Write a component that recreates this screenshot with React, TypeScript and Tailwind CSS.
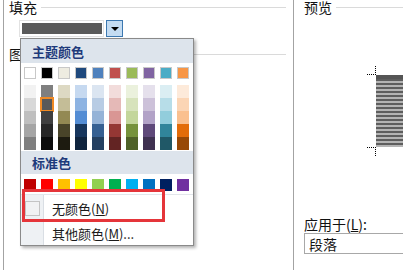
import React from 'react';

const font = "font-['Noto_Sans_CJK_SC','Noto_Sans',sans-serif]";

const themeTop = ['#ffffff', '#000000', '#eeece1', '#1f497d', '#4f81bd', '#c0504d', '#9bbb59', '#8064a2', '#4bacc6', '#f79646'];

const themeShades: string[][] = [
  ['#f2f2f2', '#d8d8d8', '#bfbfbf', '#a5a5a5', '#7f7f7f'],
  ['#7f7f7f', '#595959', '#3f3f3f', '#262626', '#0c0c0c'],
  ['#ddd9c3', '#c4bd97', '#938953', '#494429', '#1d1b10'],
  ['#c6d9f0', '#8db3e2', '#548dd4', '#17365d', '#0f243e'],
  ['#dbe5f1', '#b8cce4', '#95b3d7', '#366092', '#244061'],
  ['#f2dcdb', '#e5b9b7', '#d99694', '#953734', '#632423'],
  ['#ebf1dd', '#d7e3bc', '#c3d69b', '#76923c', '#4f6128'],
  ['#e5e0ec', '#ccc1d9', '#b2a2c7', '#5f497a', '#3f3151'],
  ['#dbeef3', '#b7dde8', '#92cddc', '#31859b', '#205867'],
  ['#fdeada', '#fbd5b5', '#fac08f', '#e36c09', '#974806'],
];

const standard = ['#c00000', '#ff0000', '#ffc000', '#ffff00', '#92d050', '#00b050', '#00b0f0', '#0070c0', '#002060', '#7030a0'];

const Legend = ({ label, indent }: { label: string; indent: string }) => (
  <div className={`flex items-center h-[15px] ${indent}`}>
    <span className="text-[14px] leading-[15px] text-[#111]">{label}</span>
    <div className="flex-1 h-px bg-[#dadada] ml-[4px]" />
  </div>
);

const ColorPicker = () => (
  <div className="absolute left-[20px] top-[38px] w-[174px] h-[208px] bg-white border border-[#8a8a8a] shadow-[2px_2px_3px_rgba(0,0,0,0.3)] flex flex-col">
    <div className="h-[24px] bg-[#dde4ec] flex items-center pl-[11px]">
      <span className="text-[13px] font-bold text-[#1e3a7b] leading-none">主题颜色</span>
    </div>
    <div className="pl-[3px] pt-[4px] grid grid-cols-[repeat(10,12px)] gap-x-[5px]">
      {themeTop.map((c) => (
        <div key={c} className="w-[12px] h-[12px] border border-[#c8c8c8]" style={{ backgroundColor: c }} />
      ))}
    </div>
    <div className="pl-[3px] pt-[6px] grid grid-cols-[repeat(10,12px)] gap-x-[5px]">
      {themeShades.map((col, ci) => (
        <div key={ci} className="flex flex-col">
          {col.map((c, ri) => (
            <div key={ri} className="relative w-[12px] h-[13px]" style={{ backgroundColor: c }}>
              {ci === 1 && ri === 1 && (
                <div className="absolute -inset-[1px] border-2 border-[#f08a24] bg-[#595959]" />
              )}
            </div>
          ))}
        </div>
      ))}
    </div>
    <div className="mt-[1px] h-[23px] bg-[#dde4ec] flex items-center pl-[11px]">
      <span className="text-[13px] font-bold text-[#1e3a7b] leading-none">标准色</span>
    </div>
    <div className="pl-[3px] pt-[5px] grid grid-cols-[repeat(10,12px)] gap-x-[5px]">
      {standard.map((c) => (
        <div key={c} className="w-[12px] h-[12px]" style={{ backgroundColor: c }} />
      ))}
    </div>
    <div className="flex-1 mt-[3px] flex flex-col border-t border-[#e2e6eb]">
      <div className="h-[27px] flex items-center">
        <div className="w-[23px] h-full bg-[#eef1f4] border-r border-[#d9dee4] flex items-center justify-center">
          <div className="w-[15px] h-[15px] border border-[#c4c4c4] bg-[#f1f2f3]" />
        </div>
        <span className="ml-[8px] text-[13px] text-[#1a1a1a] leading-none">
          无颜色(<span className="underline">N</span>)
        </span>
      </div>
      <div className="flex-1 flex items-center">
        <div className="w-[23px] h-full bg-[#eef1f4] border-r border-[#d9dee4]" />
        <span className="ml-[8px] text-[13px] text-[#1a1a1a] leading-none">
          其他颜色(<span className="underline">M</span>)...
        </span>
      </div>
    </div>
    <div className="absolute left-[1px] top-[150px] w-[143px] h-[33px] border-[3px] border-[#e5353a]" />
  </div>
);

export default function App() {
  return (
    <div className={`relative w-[403px] h-[270px] bg-white overflow-hidden flex pl-[3px] ${font}`}>
      <div className="w-[291px] shrink-0 h-full border-l border-r border-[#a3a3a3] flex flex-col">
        <Legend label="填充" indent="pl-[5px] pr-[7px]" />
        <div className="flex items-center mt-[5px] pl-[15px]">
          <div className="w-[85px] h-[17px] bg-white border border-[#e2e2e2] p-[2px] pr-[1px]">
            <div className="w-full h-full bg-[#5a5a5a]" />
          </div>
          <div className="ml-[2px] w-[17px] h-[17px] bg-[#c4dcf2] border border-[#3c78b0] flex items-center justify-center">
            <div className="w-0 h-0 border-l-[4px] border-r-[4px] border-t-[4px] border-l-transparent border-r-transparent border-t-black" />
          </div>
        </div>
        <div className="mt-[10px]">
          <Legend label="图案" indent="pl-[5px] pr-[7px]" />
        </div>
      </div>
      <div className="w-[109px] shrink-0 flex flex-col">
        <Legend label="预览" indent="pl-[10px]" />
        <div className="h-[202px] pt-[51px] pl-[73px] flex flex-col">
          <div className="w-[9px] h-[9px] border-b border-r border-dotted border-black" />
          <div className="ml-[9px] h-[72px] bg-[repeating-linear-gradient(to_bottom,#5e5e5e_0px,#5e5e5e_2px,#b4b4b4_2px,#b4b4b4_4px)] border-t-[4px] border-[#555]" />
          <div className="w-[9px] h-[9px] border-t border-r border-dotted border-black mr-auto" />
        </div>
        <div className="h-[16px] pl-[10px] text-[14px] leading-[15px] text-[#111]">
          应用于(<span className="underline">L</span>):
        </div>
        <div className="ml-[10px] w-[120px] shrink-0 h-[21px] border border-[#a8a8a8] flex items-center pl-[4px] text-[14px] leading-none text-[#111]">
          段落
        </div>
      </div>
      <ColorPicker />
    </div>
  );
}
